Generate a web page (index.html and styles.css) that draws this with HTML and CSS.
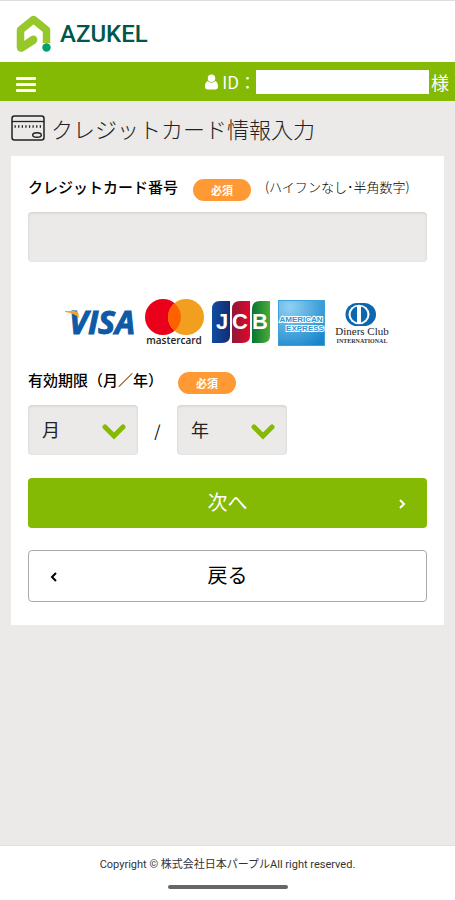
FILE: index.html
```
<!DOCTYPE html>
<html lang="ja">
<head>
    <meta charset="UTF-8">
    <meta name="viewport" content="width=device-width, initial-scale=1.0">
    <title>クレジットカード情報入力 | AZUKEL</title>
    <link rel="stylesheet" href="styles.css">
</head>
<body>
    <header class="header">
        <a class="logo" href="#">
            <svg class="logo-mark" viewBox="0 0 36 38" aria-hidden="true">
                <path d="M30.500 28V15L17.500 4.500L4.500 15V33" fill="none" stroke="#96c82b" stroke-width="7.500" stroke-linejoin="round"/>
                <path d="M0.750 32Q1 38 7 36.500L19.500 28.500Q23 25 20 21.500Q18 19.500 14.500 21.500L8 26V31Z" fill="#96c82b"/>
                <circle cx="30.500" cy="32.500" r="4.200" fill="#00a06a"/>
            </svg>
            <span class="logo-name">AZUKEL</span>
        </a>
    </header>

    <nav class="navbar">
        <button class="menu-button" type="button" aria-label="メニュー">
            <span class="menu-line"></span>
            <span class="menu-line"></span>
            <span class="menu-line"></span>
        </button>
        <div class="user">
            <svg class="user-icon" viewBox="0 0 14 16" aria-hidden="true">
                <ellipse cx="7" cy="4" rx="4" ry="4"/>
                <path d="M3 7C1 7.500 0 10 0 13C0 15 1 16 3 16H11C13 16 14 15 14 13C14 10 13 7.500 11 7C9 9.300 5 9.300 3 7Z"/>
            </svg>
            <span class="user-label">ID：</span>
            <span class="user-id"></span>
            <span class="user-suffix">様</span>
        </div>
    </nav>

    <main class="main">
        <h1 class="page-title">
            <svg class="title-icon" viewBox="0 0 34 26" fill="none" stroke="#222" aria-hidden="true">
                <rect x="1" y="1" width="32" height="24" rx="2.500" stroke-width="1.500"/>
                <path d="M1 6.500H33" stroke-width="1.300"/>
                <path d="M3.500 11.500H31" stroke-width="2.500" stroke-dasharray="1.300 2.300"/>
                <ellipse cx="26" cy="20" rx="4.300" ry="2.300" stroke-width="1.500"/>
            </svg>
            クレジットカード情報入力
        </h1>

        <form class="card">
            <div class="field-head">
                <label class="field-label" for="cardNumber">クレジットカード番号</label>
                <span class="badge">必須</span>
                <span class="note">(ハイフンなし･半角数字)</span>
            </div>
            <input class="text-input" type="text" id="cardNumber" name="cardNumber" inputmode="numeric" required>

            <div class="brands">
                <svg width="72" height="48" viewBox="0 0 72 48" role="img" aria-label="VISA">
                    <text class="visa-text" x="4" y="35">VISA</text>
                    <path d="M0 12H9Q13 12 13.500 15L14 19Q9 14 0 13Z" fill="#f5a623"/>
                </svg>
                <svg width="59" height="48" viewBox="0 0 59 48" role="img" aria-label="mastercard">
                    <circle cx="18" cy="18" r="18" fill="#eb001b"/>
                    <circle cx="41" cy="18" r="18" fill="#f29f20"/>
                    <path d="M29.500 4.200A18 18 0 0 1 29.500 31.800A18 18 0 0 1 29.500 4.200Z" fill="#ff6000"/>
                    <text class="mastercard-text" x="29" y="45">mastercard</text>
                </svg>
                <svg width="58" height="48" viewBox="0 0 58 48" role="img" aria-label="JCB">
                    <defs>
                        <linearGradient id="jcbBlue"><stop stop-color="#0f4da2"/><stop offset="1" stop-color="#142c70"/></linearGradient>
                        <linearGradient id="jcbRed"><stop stop-color="#8e1837"/><stop offset="1" stop-color="#e3062c"/></linearGradient>
                        <linearGradient id="jcbGreen"><stop stop-color="#087434"/><stop offset="1" stop-color="#49ad35"/></linearGradient>
                    </defs>
                    <path d="M8 2H18V37Q18 44 10 44H0V10Q0 2 8 2Z" fill="url(#jcbBlue)"/>
                    <path d="M28 2H38V37Q38 44 30 44H20V10Q20 2 28 2Z" fill="url(#jcbRed)"/>
                    <path d="M48 2H58V37Q58 44 50 44H40V10Q40 2 48 2Z" fill="url(#jcbGreen)"/>
                    <text class="jcb-text" x="10" y="30">J</text>
                    <text class="jcb-text" x="28" y="30">C</text>
                    <text class="jcb-text" x="48" y="30">B</text>
                </svg>
                <svg width="47" height="48" viewBox="0 0 47 48" role="img" aria-label="AMERICAN EXPRESS">
                    <defs>
                        <radialGradient id="amexBlue" cx="0.250" cy="0.150" r="1"><stop stop-color="#8fd0f3"/><stop offset="1" stop-color="#1685cb"/></radialGradient>
                    </defs>
                    <rect y="1" width="47" height="46" fill="url(#amexBlue)"/>
                    <rect x="0.500" y="1.500" width="46" height="45" fill="none" stroke="#3da2db"/>
                    <text class="amex-text" x="23" y="23">AMERICAN</text>
                    <text class="amex-text" x="27" y="32">EXPRESS</text>
                </svg>
                <svg width="58" height="48" viewBox="0 0 58 48" role="img" aria-label="Diners Club INTERNATIONAL">
                    <path d="M24 4H31A12 11.500 0 0 1 31 27H24A11.500 11.500 0 0 1 24 4Z" fill="#0d67ae"/>
                    <ellipse cx="26" cy="15.500" rx="10.500" ry="9.800" fill="#fff"/>
                    <path d="M24 7.500A8.200 8.200 0 0 0 24 23.500ZM28 7.500A8.200 8.200 0 0 1 28 23.500Z" fill="#0d67ae"/>
                    <text class="diners-text" x="29" y="36">Diners Club</text>
                    <text class="diners-sub" x="29" y="44">INTERNATIONAL</text>
                </svg>
            </div>

            <div class="field-head">
                <label class="field-label" for="month">有効期限（月／年）</label>
                <span class="badge">必須</span>
            </div>
            <div class="expiry">
                <div class="select-box">
                    <select class="select" id="month" name="month" required>
                        <option value="">月</option>
                        <option>01</option><option>02</option><option>03</option><option>04</option>
                        <option>05</option><option>06</option><option>07</option><option>08</option>
                        <option>09</option><option>10</option><option>11</option><option>12</option>
                    </select>
                    <svg class="select-arrow" viewBox="0 0 24 16" aria-hidden="true"><path d="M3 3L12 12L21 3"/></svg>
                </div>
                <span class="slash">/</span>
                <div class="select-box">
                    <select class="select" id="year" name="year" aria-label="年" required>
                        <option value="">年</option>
                        <option>2024</option><option>2025</option><option>2026</option>
                        <option>2027</option><option>2028</option><option>2029</option>
                    </select>
                    <svg class="select-arrow" viewBox="0 0 24 16" aria-hidden="true"><path d="M3 3L12 12L21 3"/></svg>
                </div>
            </div>

            <button class="btn btn-next" type="submit">
                次へ
                <svg class="btn-arrow" viewBox="0 0 8 12" aria-hidden="true"><path d="M2 2L6 6L2 10"/></svg>
            </button>
            <button class="btn btn-back" type="button">
                <svg class="btn-arrow" viewBox="0 0 8 12" aria-hidden="true"><path d="M6 2L2 6L6 10"/></svg>
                戻る
            </button>
        </form>
    </main>

    <footer class="footer">
        <p class="copyright">Copyright © 株式会社日本パープルAll right reserved.</p>
        <div class="home-bar"></div>
    </footer>
</body>
</html>
```

FILE: styles.css
```
:root {
    --green: #84b904;
    --orange: #ff9933;
    --gray: #ebeae8;
    --radius: 4px;
}

* {
    margin: 0;
    padding: 0;
    box-sizing: border-box;
}

body {
    display: flex;
    flex-direction: column;
    min-height: 100vh;
    background-color: var(--gray);
    color: #000;
    font-family: "Noto Sans CJK JP", sans-serif;
}

button,
input,
select {
    font-family: inherit;
    color: inherit;
}

/* header */
.header {
    height: 62px;
    padding: 12px 16px 0;
    background-color: #fff;
    border-top: 1px solid #dddde3;
}

.logo {
    display: inline-flex;
    align-items: center;
    gap: 8px;
    text-decoration: none;
}

.logo-mark {
    width: 36px;
    height: 38px;
}

.logo-name {
    font-family: Roboto, sans-serif;
    font-size: 24px;
    font-weight: 500;
    line-height: 42px;
    color: #00584b;
}

.navbar {
    display: flex;
    align-items: center;
    justify-content: space-between;
    height: 39px;
    padding: 0 6px 0 16px;
    background-color: var(--green);
    color: #fff;
}

.menu-button {
    display: flex;
    flex-direction: column;
    gap: 3px;
    padding-top: 6px;
    background: none;
    border: none;
    cursor: pointer;
}

.menu-line {
    width: 20px;
    height: 3px;
    border-radius: 1px;
    background-color: #fff;
}

.user {
    display: flex;
    align-items: center;
    font-size: 18px;
    line-height: 24px;
}

.user-icon {
    width: 13px;
    height: 16px;
    margin-right: 4px;
    fill: #fff;
}

.user-label {
    font-size: 17px;
}

.user-id {
    width: 173px;
    height: 24px;
    margin-right: 2px;
    background-color: #fff;
}

/* main */
.main {
    flex: 1;
    padding: 11px 11px 12px;
}

.page-title {
    display: flex;
    align-items: center;
    gap: 6px;
    margin-bottom: 12px;
    font-size: 22px;
    font-weight: 300;
    line-height: 32px;
    color: #222;
}

.title-icon {
    width: 34px;
    height: 26px;
}

.card {
    padding: 19px 17px 23px;
    background-color: #fff;
}

.field-head {
    display: flex;
    align-items: flex-start;
    line-height: 24px;
}

.field-label {
    font-size: 15px;
    font-weight: 500;
}

.badge {
    width: 58px;
    margin: 4px 14px 0 15px;
    border-radius: 11px;
    background-color: var(--orange);
    color: #fff;
    font-size: 11px;
    font-weight: 700;
    line-height: 22px;
    text-align: center;
}

.note {
    font-size: 13px;
    font-weight: 300;
}

.text-input,
.select {
    display: block;
    width: 100%;
    height: 50px;
    padding: 0 14px 2px;
    background-color: var(--gray);
    border: none;
    border-radius: var(--radius);
    box-shadow: inset 0 1px 3px rgba(0, 0, 0, 0.12);
    font-size: 18px;
}

.text-input {
    margin-top: 11px;
}

.brands {
    display: flex;
    justify-content: center;
    gap: 8px;
    margin: 37px 0 21px;
}

.visa-text {
    font: italic 700 32px "Open Sans", sans-serif;
    fill: #0e5aa7;
    stroke: #0e5aa7;
    stroke-width: 1px;
}

.mastercard-text {
    font: 600 10px "Open Sans", sans-serif;
    text-anchor: middle;
    fill: #222;
}

.jcb-text {
    font: bold 22px "Liberation Sans", sans-serif;
    text-anchor: middle;
    fill: #fff;
}

.amex-text {
    font: bold 8px "Liberation Sans", sans-serif;
    text-anchor: middle;
    fill: #2d95d3;
    stroke: #fff;
    stroke-width: 2px;
    paint-order: stroke;
}

.diners-text {
    font: 11px "Liberation Serif", serif;
    text-anchor: middle;
    fill: #222;
}

.diners-sub {
    font: bold 6px "Liberation Serif", serif;
    text-anchor: middle;
    fill: #333;
}

.expiry {
    display: flex;
    align-items: center;
    margin: 11px 0 23px;
}

.select-box {
    position: relative;
    width: 110px;
}

.select {
    appearance: none;
    color: #222;
    cursor: pointer;
}

.select-arrow {
    position: absolute;
    top: 19px;
    right: 12px;
    width: 24px;
    height: 16px;
    fill: none;
    stroke: var(--green);
    stroke-width: 5;
    stroke-linecap: round;
    pointer-events: none;
}

.slash {
    width: 39px;
    font-size: 16px;
    text-align: center;
}

.btn {
    position: relative;
    display: block;
    width: 100%;
    height: 50px;
    padding-bottom: 2px;
    border: none;
    border-radius: var(--radius);
    font-size: 20px;
    line-height: 30px;
    cursor: pointer;
}

.btn-arrow {
    position: absolute;
    top: 20px;
    width: 8px;
    height: 12px;
    fill: none;
    stroke: currentColor;
    stroke-width: 2;
}

.btn-next {
    margin-bottom: 22px;
    background-color: var(--green);
    color: #fff;
}

.btn-next .btn-arrow {
    right: 21px;
}

.btn-back {
    height: 52px;
    background-color: #fff;
    border: 1px solid #aaa;
}

.btn-back .btn-arrow {
    left: 21px;
}

/* footer */
.footer {
    padding: 10px 0 11px;
    background-color: #fff;
    border-top: 1px solid #e0e0e0;
    text-align: center;
}

.copyright {
    font-family: Roboto, "Noto Sans CJK JP", sans-serif;
    font-size: 11px;
    line-height: 18px;
    color: #333;
}

.home-bar {
    width: 120px;
    height: 4px;
    margin: 11px auto 0;
    border-radius: 2px;
    background-color: #666;
}
```
